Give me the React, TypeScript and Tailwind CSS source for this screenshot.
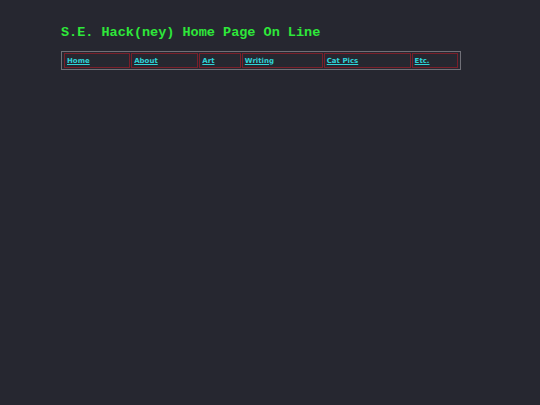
import React from 'react';

const links = [
  { label: 'Home', w: 'w-[67px]' },
  { label: 'About', w: 'w-[68px]' },
  { label: 'Art', w: 'w-[42px]' },
  { label: 'Writing', w: 'w-[82px]' },
  { label: 'Cat Pics', w: 'w-[88px]' },
  { label: 'Etc.', w: 'w-[47px]' },
];

export default function App() {
  return (
    <div className="min-h-screen bg-[#262730] pt-[25px] pl-[61px]">
      <h1 className="font-['Liberation_Mono',monospace] font-bold text-[13.5px] leading-[16px] text-[#2ee83a]">
        S.E. Hack(ney) Home Page On Line
      </h1>
      <div className="mt-[10px] w-[400px] h-[19px] border border-[#707078] flex items-center gap-[1px] px-[2px]">
        {links.map((l) => (
          <div
            key={l.label}
            className={`${l.w} h-[15px] border border-[#7a1f2a] flex items-center pl-[2px]`}
          >
            <a
              href="#"
              className="font-['DejaVu_Sans',sans-serif] font-bold text-[7px] leading-[8px] text-[#2fd3d8] underline"
            >
              {l.label}
            </a>
          </div>
        ))}
      </div>
    </div>
  );
}
